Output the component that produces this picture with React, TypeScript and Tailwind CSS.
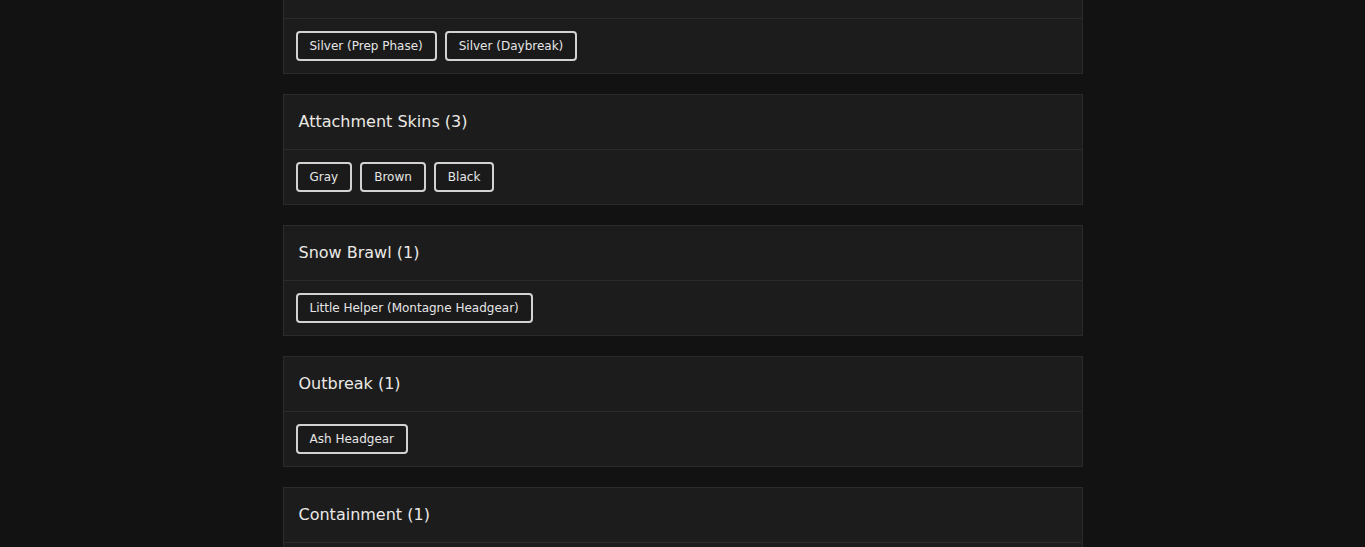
import React from 'react';

const groups = [
  { title: 'Hidden', items: ['Silver (Prep Phase)', 'Silver (Daybreak)'] },
  { title: 'Attachment Skins', items: ['Gray', 'Brown', 'Black'] },
  { title: 'Snow Brawl', items: ['Little Helper (Montagne Headgear)'] },
  { title: 'Outbreak', items: ['Ash Headgear'] },
  { title: 'Containment', items: ['Placeholder'] },
];

const font = { fontFamily: '"DejaVu Sans", "Open Sans", sans-serif' };

export default function App() {
  return (
    <div className="h-[547px] overflow-hidden bg-[#121212]" style={font}>
      <div className="w-[800px] mx-auto -mt-[37px] flex flex-col gap-5">
        {groups.map((g) => (
          <section key={g.title} className="bg-[#1c1c1c] border border-[#2b2b2b]">
            <div className="h-[55px] flex items-center px-[15px] border-b border-[#2b2b2b]">
              <h2 className="text-[16px] font-medium text-[#ebe9e6]">
                {g.title} ({g.items.length})
              </h2>
            </div>
            <div className="p-3 flex flex-wrap gap-2">
              {g.items.map((it) => (
                <button
                  key={it}
                  className="h-[30px] px-3 rounded-[4px] border-2 border-[#d2d2d2] bg-[#1a1a1a] text-[12px] text-[#e6e6e6]"
                >
                  {it}
                </button>
              ))}
            </div>
          </section>
        ))}
      </div>
    </div>
  );
}
